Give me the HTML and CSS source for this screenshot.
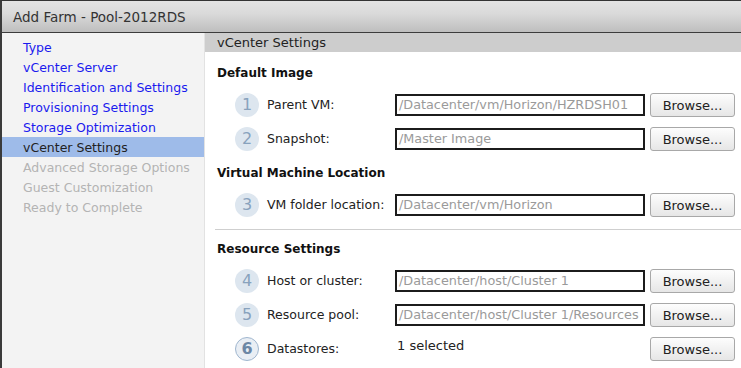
FILE: index.html
```html
<!DOCTYPE html>
<html>
	<head>
		<meta charset="UTF-8">
		<title>Add Farm</title>
		<link rel="stylesheet" href="styles.css">
	</head>
	<body>
		<div class="window">
			<div class="titlebar">Add Farm - Pool-2012RDS</div>
			<div class="body">
				<nav class="side">
					<span class="side_i">Type</span>
					<span class="side_i">vCenter Server</span>
					<span class="side_i">Identification and Settings</span>
					<span class="side_i">Provisioning Settings</span>
					<span class="side_i">Storage Optimization</span>
					<span class="side_i active">vCenter Settings</span>
					<span class="side_i off">Advanced Storage Options</span>
					<span class="side_i off">Guest Customization</span>
					<span class="side_i off">Ready to Complete</span>
				</nav>
				<div class="main">
					<div class="main_head">vCenter Settings</div>
					<div class="content">
						<h3 class="sec">Default Image</h3>
						<div class="row">
							<span class="num">1</span>
							<span class="label">Parent VM:</span>
							<div class="field">/Datacenter/vm/Horizon/HZRDSH01</div>
							<button class="btn">Browse...</button>
						</div>
						<div class="row">
							<span class="num">2</span>
							<span class="label">Snapshot:</span>
							<div class="field">/Master Image</div>
							<button class="btn">Browse...</button>
						</div>

						<h3 class="sec">Virtual Machine Location</h3>
						<div class="row">
							<span class="num">3</span>
							<span class="label">VM folder location:</span>
							<div class="field">/Datacenter/vm/Horizon</div>
							<button class="btn">Browse...</button>
						</div>

						<div class="line"></div>

						<h3 class="sec sec_res">Resource Settings</h3>
						<div class="row">
							<span class="num">4</span>
							<span class="label">Host or cluster:</span>
							<div class="field">/Datacenter/host/Cluster 1</div>
							<button class="btn">Browse...</button>
						</div>
						<div class="row">
							<span class="num">5</span>
							<span class="label">Resource pool:</span>
							<div class="field">/Datacenter/host/Cluster 1/Resources</div>
							<button class="btn">Browse...</button>
						</div>
						<div class="row">
							<span class="num cur">6</span>
							<span class="label">Datastores:</span>
							<div class="value">1 selected</div>
							<button class="btn">Browse...</button>
						</div>
					</div>
				</div>
			</div>
		</div>
	</body>
</html>
```

FILE: styles.css
```css
body,
h3 {
    margin: 0;
    padding: 0;
}

body {
    font-family: "DejaVu Sans", Verdana, sans-serif;
    font-size: 12px;
    color: #222;
    background: #fff;
}

.window {
    width: 741px;
    height: 368px;
    border-top: 1px solid #333;
    border-left: 2px solid #3a3a3a;
    box-sizing: border-box;
    display: flex;
    flex-direction: column;
    overflow: hidden;
}

.titlebar {
    height: 31px;
    line-height: 32px;
    padding-left: 11px;
    font-size: 13.5px;
    color: #333;
    background: linear-gradient(#e3e3e3 0%, #dadada 40%, #bebebe 100%);
    border-bottom: 1px solid #3c3c3c;
    flex-shrink: 0;
}

.body {
    display: flex;
    flex: 1;
}

.side {
    width: 202px;
    background: #f3f3f3;
    border-right: 1px solid #e2e2e2;
    padding-top: 4px;
    display: flex;
    flex-direction: column;
    flex-shrink: 0;
}

.side_i {
    display: block;
    height: 20px;
    line-height: 21px;
    padding-left: 21px;
    font-size: 12.5px;
    color: #1a1aee;
}

.side_i.active {
    background: #9ebbe9;
    color: #222;
}

.side_i.off {
    color: #b4b4b4;
}

.main {
    flex: 1;
    display: flex;
    flex-direction: column;
}

.main_head {
    height: 19px;
    line-height: 19px;
    background: #cdcdcd;
    padding-left: 12px;
    font-size: 13px;
    color: #222;
}

.content {
    padding: 11px 0 0 12px;
}

.sec {
    height: 20px;
    line-height: 20px;
    font-size: 12px;
    font-weight: bold;
    color: #111;
    margin-bottom: 5px;
}

.row {
    height: 34px;
    display: flex;
    align-items: center;
    padding-left: 18px;
}

.row + .sec {
    margin-top: 7px;
}

.num {
    width: 24px;
    height: 24px;
    border-radius: 50%;
    background: #dde6ef;
    color: #88a2bd;
    font-size: 16px;
    line-height: 24px;
    text-align: center;
    margin-right: 8px;
    flex-shrink: 0;
}

.num.cur {
    width: 22px;
    height: 22px;
    line-height: 22px;
    border: 1px solid #9fb6cf;
    background: #e9eef4;
    color: #6c87a5;
    font-weight: bold;
}

.label {
    width: 128px;
    margin-top: -2px;
    font-size: 12.5px;
    flex-shrink: 0;
}

.field,
.value {
    width: 250px;
    height: 22px;
    line-height: 18px;
    box-sizing: border-box;
    padding-left: 2px;
    color: #9a9a9a;
    font-size: 12.8px;
    white-space: nowrap;
    overflow: hidden;
    flex-shrink: 0;
}

.field {
    border: 2px solid #1c1c1c;
}

.value {
    color: #222;
    padding-left: 2px;
    line-height: 20px;
    font-size: 13px;
    margin-top: -4px;
}

.btn {
    margin-left: 5px;
    width: 85px;
    height: 24px;
    border: 1px solid #a8a8a8;
    border-radius: 3px;
    background: linear-gradient(#fdfdfd, #e6e6e6);
    font-family: "DejaVu Sans", Verdana, sans-serif;
    font-size: 13px;
    color: #222;
    padding: 0;
}

.line {
    height: 1px;
    background: #cfcfcf;
    margin: 7px 0 0 -2px;
}

.sec_res {
    margin-top: 9px;
}
```
